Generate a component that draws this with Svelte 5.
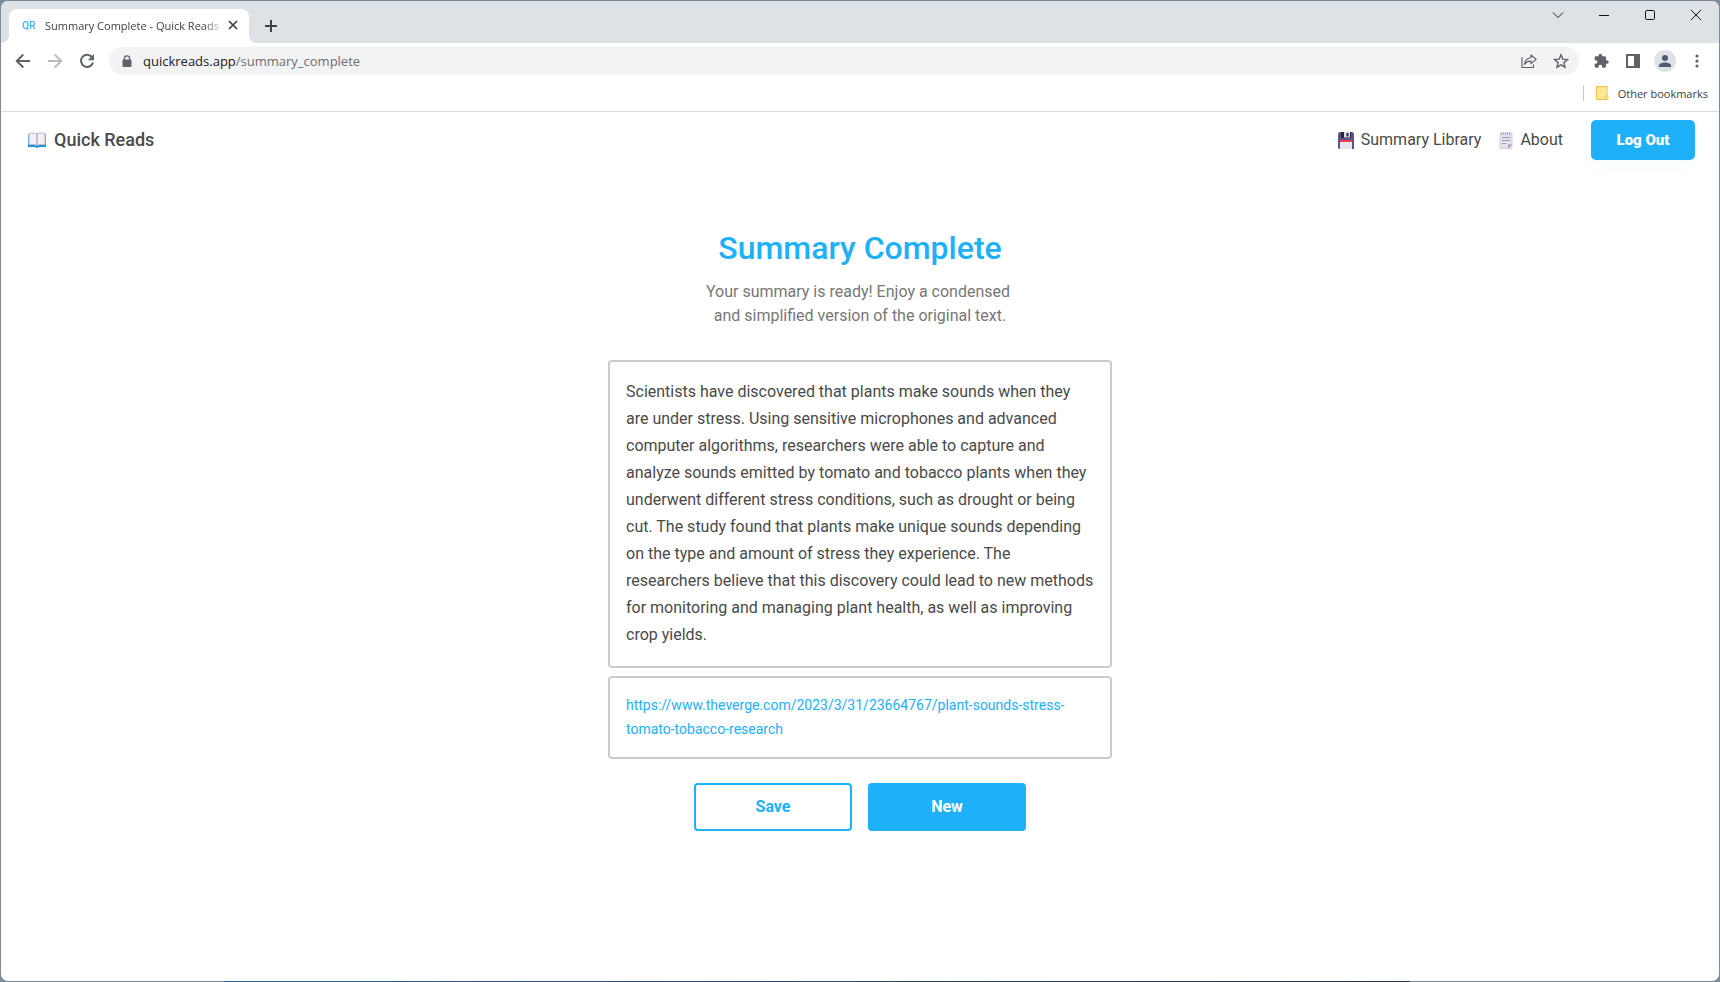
<!--
  Summary page shown inside its browser window: tab strip, toolbar,
  bookmarks bar, then the site header and the finished summary.
-->
<script lang="ts">
  const summary =
    'Scientists have discovered that plants make sounds when they are under stress. Using sensitive microphones and advanced computer algorithms, researchers were able to capture and analyze sounds emitted by tomato and tobacco plants when they underwent different stress conditions, such as drought or being cut. The study found that plants make unique sounds depending on the type and amount of stress they experience. The researchers believe that this discovery could lead to new methods for monitoring and managing plant health, as well as improving crop yields.';
  const source = 'https://www.theverge.com/2023/3/31/23664767/plant-sounds-stress-tomato-tobacco-research';
</script>

<div class="window">
  <div class="tabs">
    <div class="tab">
      <span class="favicon">QR</span>
      <span class="title">Summary Complete - Quick Reads</span>
      <button type="button" class="icon" aria-label="Close tab">
        <svg width="10" height="10" viewBox="0 0 10 10"><path d="M1 1l8 8M9 1L1 9" stroke="#3c4043" stroke-width="1.7" /></svg>
      </button>
    </div>
    <button type="button" class="icon add" aria-label="New tab">
      <svg width="12" height="12" viewBox="0 0 12 12"><path d="M6 0v12M0 6h12" stroke="#3c4043" stroke-width="2" /></svg>
    </button>
    <div class="controls">
      <button type="button" class="icon" aria-label="Search tabs">
        <svg width="12" height="12" viewBox="0 0 12 12"><path d="M1 3.5l5 5 5-5" fill="none" stroke="#222" /></svg>
      </button>
      <button type="button" class="icon" aria-label="Minimize">
        <svg width="12" height="12" viewBox="0 0 12 12"><path d="M1 6.5h10" stroke="#111" /></svg>
      </button>
      <button type="button" class="icon" aria-label="Maximize">
        <svg width="12" height="12" viewBox="0 0 12 12"><rect x="1.5" y="1.5" width="9" height="9" rx="1.2" fill="none" stroke="#111" /></svg>
      </button>
      <button type="button" class="icon" aria-label="Close">
        <svg width="12" height="12" viewBox="0 0 12 12"><path d="M1 1l10 10M11 1L1 11" stroke="#111" /></svg>
      </button>
    </div>
  </div>

  <div class="toolbar">
    <button type="button" class="icon" aria-label="Back">
      <svg width="16" height="16" viewBox="0 0 16 16"><path d="M15 8H2M8.3 1.5L1.8 8l6.5 6.5" fill="none" stroke="#5f6368" stroke-width="2" /></svg>
    </button>
    <button type="button" class="icon" aria-label="Forward" disabled>
      <svg width="16" height="16" viewBox="0 0 16 16"><path d="M1 8h13M7.7 1.5L14.2 8l-6.5 6.5" fill="none" stroke="#bababa" stroke-width="2" /></svg>
    </button>
    <button type="button" class="icon" aria-label="Reload">
      <svg width="16" height="16" viewBox="0 0 16 16">
        <path d="M13.2 4.4A6.1 6.1 0 1 0 14 9.5" fill="none" stroke="#5f6368" stroke-width="2" />
        <path d="M15 1v6.2H8.8z" fill="#5f6368" />
      </svg>
    </button>
    <div class="address">
      <svg width="10" height="13" viewBox="0 0 10 13">
        <path d="M2.4 5.5V3.4a2.6 2.6 0 0 1 5.2 0v2.1" fill="none" stroke="#5f6368" stroke-width="1.3" />
        <rect x="0.5" y="4.6" width="9" height="7.4" rx="1" fill="#5f6368" />
      </svg>
      <a class="url" href="#summary">quickreads.app<span>/summary_complete</span></a>
      <div class="actions">
        <button type="button" class="icon" aria-label="Share">
          <svg width="16" height="14" viewBox="0 0 16 14">
            <path d="M1 3.3v10.2h11.5v-3" fill="none" stroke="#5f6368" stroke-width="1.2" />
            <path d="M10 1l5.2 4.4L10 9.6V7.2C7 7 5 8 3.4 10.3 3.9 6.5 6 4 10 3.5z" fill="none" stroke="#5f6368" stroke-width="1.2" stroke-linejoin="round" />
          </svg>
        </button>
        <button type="button" class="icon" aria-label="Bookmark this page">
          <svg width="16" height="16" viewBox="0 0 16 16"><path d="M8 1.8l1.8 4.3 4.7.4-3.6 3.1 1.1 4.6-4-2.4-4 2.4 1.1-4.6-3.6-3.1 4.7-.4z" fill="none" stroke="#5f6368" stroke-width="1.4" /></svg>
        </button>
      </div>
    </div>
    <div class="actions">
      <button type="button" class="icon" aria-label="Extensions">
        <svg width="16" height="16" viewBox="0 0 24 24"><path fill="#5f6368" d="M21 11h-1.500V7a2 2 0 0 0-2-2h-4V3.500a2.500 2.500 0 0 0-5 0V5h-4a2 2 0 0 0-2 2v3.800H4a2.700 2.700 0 0 1 0 5.400H2.500V20a2 2 0 0 0 2 2h3.800v-1.500a2.700 2.700 0 0 1 5.400 0V22h3.800a2 2 0 0 0 2-2v-4H21a2.500 2.500 0 0 0 0-5z" /></svg>
      </button>
      <button type="button" class="icon" aria-label="Side panel">
        <svg width="16" height="16" viewBox="0 0 16 16"><path fill="#5f6368" fill-rule="evenodd" d="M1 1h14v14H1zM3 3v10h6V3z" /></svg>
      </button>
      <button type="button" class="icon avatar" aria-label="Profile">
        <svg width="14" height="14" viewBox="0 0 14 14" fill="#4f5b6e"><circle cx="7" cy="4" r="3" /><path d="M1 13v-1.500C1 9.500 4.500 8.500 7 8.500s6 1 6 3V13z" /></svg>
      </button>
      <button type="button" class="icon" aria-label="Menu">
        <svg width="16" height="16" viewBox="0 0 16 16" fill="#5f6368"><circle cx="8" cy="3" r="1.600" /><circle cx="8" cy="8" r="1.600" /><circle cx="8" cy="13" r="1.600" /></svg>
      </button>
    </div>
  </div>

  <div class="bookmarks">
    <button type="button" class="folder">
      <svg width="13" height="14" viewBox="0 0 13 14">
        <path d="M.5.5h10.500v13H.5z" fill="#ffe694" stroke="#ecc544" />
        <rect x="9.500" y="9.500" width="2.500" height="4" rx="1" fill="#ffe694" stroke="#ecc544" />
      </svg>
      Other bookmarks
    </button>
  </div>

  <header>
    <a class="brand" href="#home">
      <svg width="20" height="16" viewBox="0 0 20 16">
        <path d="M1 3h18v12h-7l-2 1-2-1H1z" fill="#1592dc" />
        <path d="M1 2.500h1.500v10H1zM17.500 2.500H19v10h-1.500z" fill="#4fc3f7" />
        <path d="M2 1.500C5 .8 8 .8 10 2c2-1.200 5-1.200 8-.5V13c-3-.500-6-.500-8 .5-2-1-5-1-8-.5z" fill="#f2eef8" stroke="#a79bb5" stroke-width=".7" />
        <path d="M10 2v11.500" stroke="#998ca8" />
      </svg>
      <span>Quick Reads</span>
    </a>
    <nav>
      <a href="#library">
        <svg width="16" height="17" viewBox="0 0 16 17">
          <path d="M1.500 0h13L16 1.500V17H1.200L0 15.800V1.500z" fill="#5f5288" />
          <path d="M3 0h10v6H3z" fill="#2d2144" />
          <path d="M6 0h6v5.500H6z" fill="#dfd9e8" />
          <path d="M8.500 1h2v3.500h-2z" fill="#2d2144" />
          <path d="M2 8h12v9H2z" fill="#e8e5ea" />
          <path d="M2 8h12v2H2z" fill="#f23b46" />
        </svg>
        <span>Summary Library</span>
      </a>
      <a href="#about">
        <svg width="14" height="17" viewBox="0 0 14 17">
          <path d="M1 1h12v15.500H1z" fill="#e6e0ee" stroke="#cfc5d9" stroke-width=".8" />
          <path d="M9 12.500h4l-4 4z" fill="#a596b8" />
          <path d="M2 1.500h10" stroke="#a79bb5" stroke-width="2" stroke-dasharray="1 1" />
          <path d="M3 5.500h8M3 8.500h8M3 11.500h4" stroke="#a598b5" />
        </svg>
        <span>About</span>
      </a>
      <button type="button" class="logout">Log Out</button>
    </nav>
  </header>

  <main id="summary">
    <h1>Summary Complete</h1>
    <p class="lead">Your summary is ready! Enjoy a condensed&nbsp;<br />and simplified version of the original text.</p>
    <article class="card">{summary}</article>
    <div class="card source"><a href={source}>{source}</a></div>
    <div class="buttons">
      <button type="button" class="save">Save</button>
      <button type="button">New</button>
    </div>
  </main>
</div>

<style>
  /* the desktop shows through as a one-pixel rim round the window */
  :global(body) {
    background:
      linear-gradient(to right, transparent 13%, #2f5f9a 13%, #2b3245 82%, transparent 82%) bottom / 100% 1px no-repeat,
      #7b8b99;
  }
  .window {
    box-sizing: border-box;
    min-height: 100vh;
    border: 1px solid transparent;
    border-radius: 8px;
    background: #fff padding-box;
    color: #4a4a4a;
    font-family: Roboto, 'Liberation Sans', sans-serif;
    font-size: 16px;
    overflow: hidden;
  }
  button {
    border: 0;
    padding: 0;
    font: inherit;
    cursor: pointer;
  }
  a {
    color: inherit;
    text-decoration: none;
  }
  svg {
    display: block;
    flex: none;
  }
  .icon {
    display: grid;
    place-items: center;
    width: 16px;
    height: 16px;
    background: none;
  }

  .tabs,
  .toolbar,
  .bookmarks {
    display: flex;
    align-items: center;
    font-family: 'Open Sans', 'Noto Sans', sans-serif;
  }
  .tabs {
    height: 42px;
    padding-left: 8px;
    background: #dee1e6;
  }
  .tab {
    position: relative;
    display: flex;
    align-items: center;
    align-self: flex-end;
    box-sizing: border-box;
    width: 240px;
    height: 34px;
    padding: 0 8px 2px 13px;
    border-radius: 8px 8px 0 0;
    background: #fff;
    color: #3c4043;
    font-size: 11px;
  }
  .tab::before,
  .tab::after {
    content: '';
    position: absolute;
    bottom: 0;
    width: 8px;
    height: 8px;
  }
  .tab::before {
    right: 100%;
    background: radial-gradient(circle at 0 0, transparent 8px, #fff 8px);
  }
  .tab::after {
    left: 100%;
    background: radial-gradient(circle at 100% 0, transparent 8px, #fff 8px);
  }
  .favicon {
    width: 23px;
    color: #41b5ea;
    font: 500 10px Roboto, sans-serif;
  }
  .title {
    flex: 1;
    overflow: hidden;
    white-space: nowrap;
    mask-image: linear-gradient(to right, #000 88%, transparent);
  }
  .add {
    margin: 8px 0 0 14px;
  }
  .controls {
    display: flex;
    gap: 30px;
    align-self: flex-start;
    margin: 6px 15px 0 auto;
  }

  .toolbar {
    gap: 16px;
    height: 36px;
    padding: 0 14px;
  }
  .address {
    display: flex;
    flex: 1;
    align-items: center;
    gap: 11px;
    height: 28px;
    padding: 0 10px 0 13px;
    margin: 0 -2px;
    border-radius: 14px;
    background: #f1f3f4;
  }
  .url {
    flex: 1;
    color: #202124;
    font-size: 13px;
  }
  .url span {
    color: #6b6f73;
  }
  .actions {
    display: flex;
    align-items: center;
    gap: 16px;
  }
  .actions .avatar {
    width: 22px;
    height: 22px;
    margin: 0 -3px;
    border-radius: 50%;
    background: #dee1e6;
  }

  .bookmarks {
    justify-content: flex-end;
    height: 28px;
    padding: 0 11px 4px 0;
    border-bottom: 1px solid #dadce0;
  }
  .folder {
    display: flex;
    align-items: center;
    gap: 9px;
    height: 16px;
    padding-left: 12px;
    border-left: 1px solid #c8cacd;
    background: none;
    color: #3c4043;
    font-size: 11px;
  }

  header {
    display: flex;
    align-items: center;
    justify-content: space-between;
    padding: 8px 24px 8px 26px;
  }
  .brand,
  nav,
  nav a {
    display: flex;
    align-items: center;
    gap: 7px;
  }
  .brand span,
  nav span {
    padding-bottom: 2px;
  }
  .brand {
    font-size: 18px;
    font-weight: 500;
  }
  nav {
    gap: 18px;
  }
  .logout {
    width: 104px;
    height: 40px;
    margin-left: 10px;
    border-radius: 5px;
    background: #1eb0f8;
    box-shadow: 0 8px 16px rgba(30, 176, 248, 0.03);
    color: #fff;
    font-size: 15px;
    font-weight: 900;
  }

  main {
    display: flex;
    flex-direction: column;
    align-items: center;
    padding: 60px 16px;
  }
  h1 {
    margin: 0;
    color: #1eb0f8;
    font-size: 32px;
    font-weight: 500;
    line-height: 40px;
  }
  .lead {
    margin: 12px 0 32px;
    color: #777;
    line-height: 24px;
    text-align: center;
  }
  .card {
    box-sizing: border-box;
    width: 100%;
    max-width: 504px;
    padding: 16px 16px 18px;
    border: 2px solid #ccc;
    border-radius: 4px;
    line-height: 27px;
  }
  .source {
    margin-top: 8px;
    padding: 15px 16px 16px;
    color: #1eb0f8;
    font-size: 14px;
    line-height: 24px;
  }
  .buttons {
    display: flex;
    gap: 16px;
    margin-top: 24px;
  }
  .buttons button {
    width: 158px;
    height: 48px;
    padding-bottom: 2px;
    border: 2px solid #1eb0f8;
    border-radius: 4px;
    background: #1eb0f8;
    color: #fff;
    font-weight: 700;
  }
  .buttons .save {
    background: #fff;
    color: #1eb0f8;
  }
</style>
